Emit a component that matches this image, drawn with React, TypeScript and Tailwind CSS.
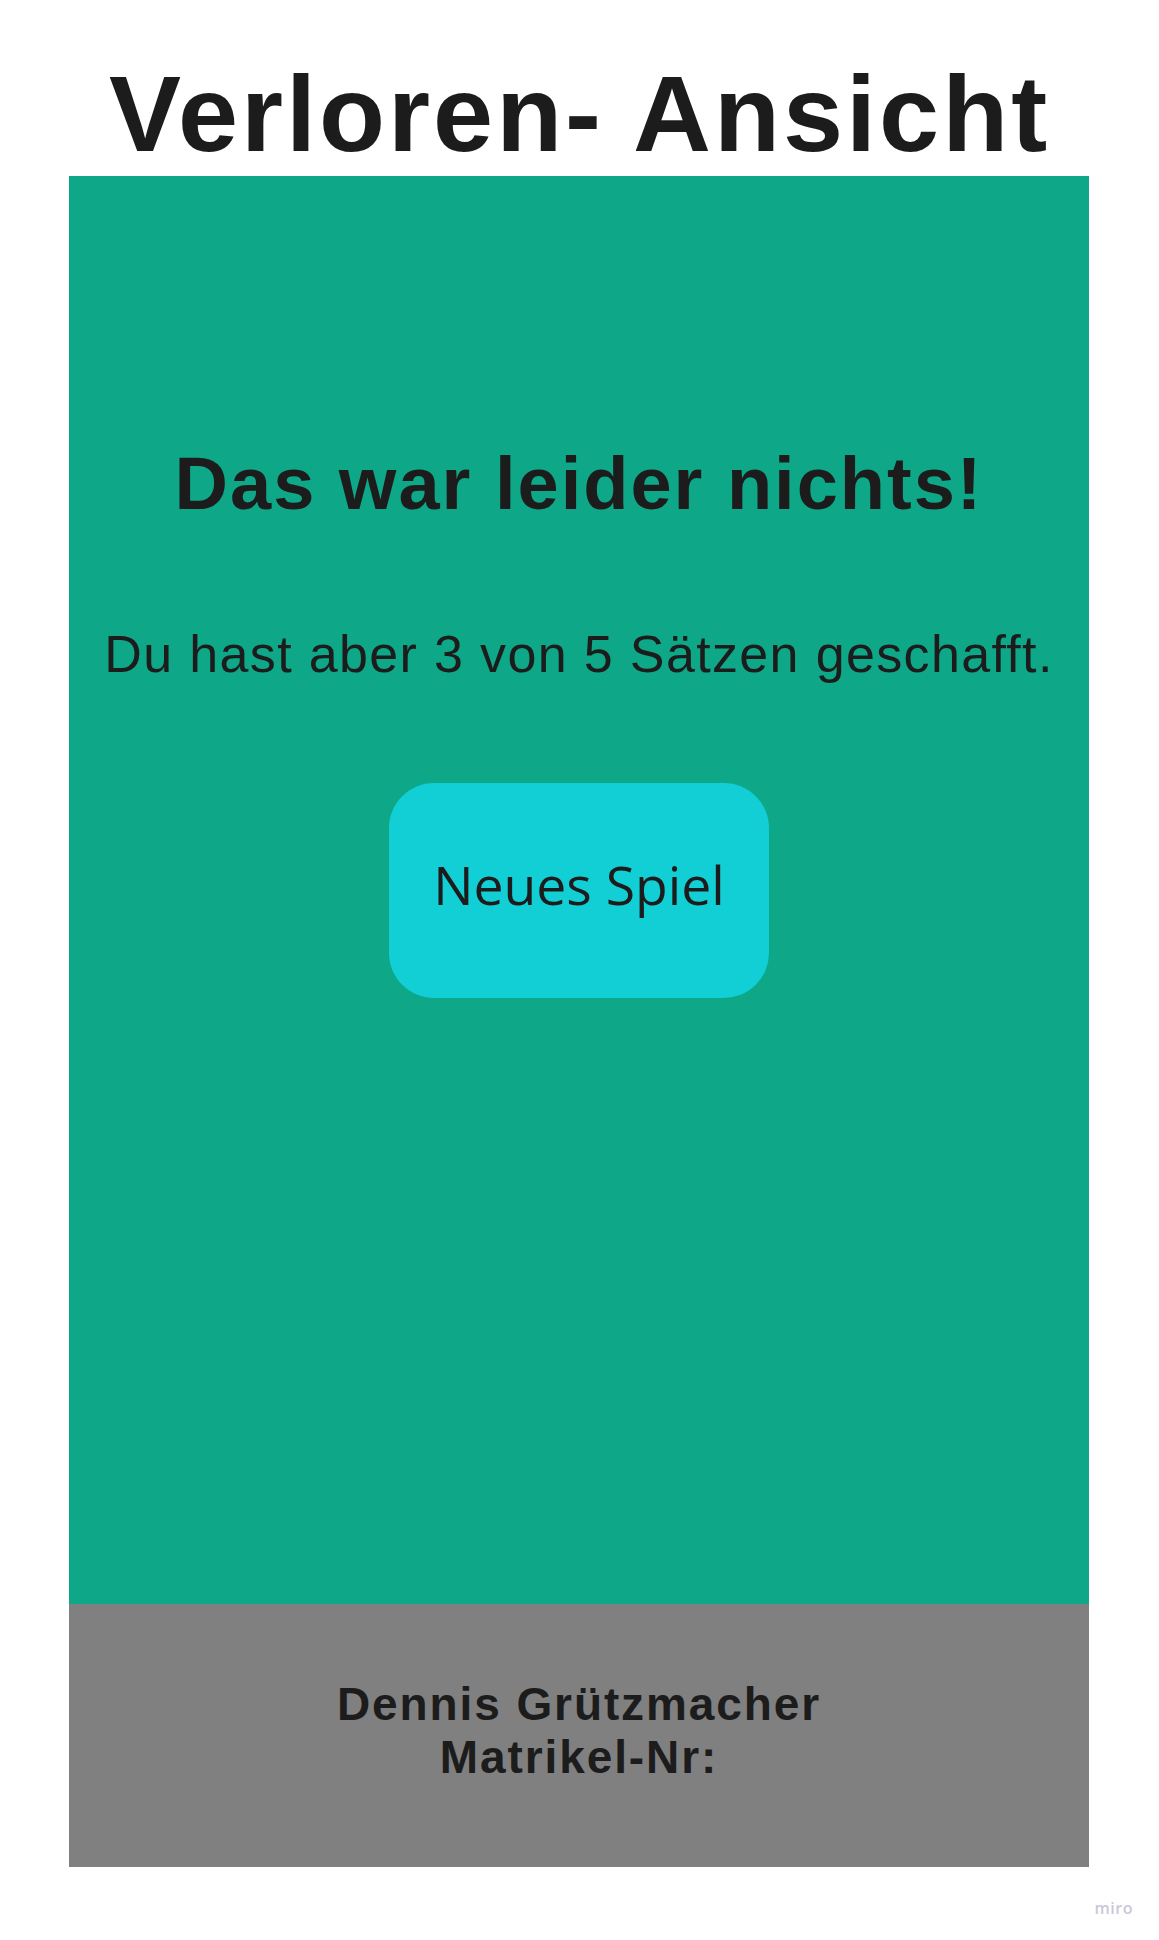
export default function App() {
  return (
    <div className="min-h-[1940px] w-[1159px] bg-white font-['Liberation_Sans',Arial,sans-serif] text-[#1c1c1c]">
      {/* Titel */}
      <h1 className="pt-[51px] text-center text-[108px] font-bold leading-[125px] tracking-[3px]">
        Verloren- Ansicht
      </h1>

      {/* Hauptbereich */}
      <main className="ml-[69px] flex h-[1428px] w-[1020px] flex-col items-center bg-[#0ea888] pt-[265px]">
        <h2 className="text-[74px] font-bold leading-[85px] tracking-[2px]">Das war leider nichts!</h2>
        <p className="mt-[98px] text-[52px] leading-[60px] tracking-[1.35px]">
          Du hast aber 3 von 5 Sätzen geschafft.
        </p>
        <button className="mt-[99px] flex h-[215px] w-[380px] items-center justify-center rounded-[45px] bg-[#12ced5] pb-[10px] font-['Open_Sans',sans-serif] text-[53.5px] text-[#1c1c1c]">
          Neues Spiel
        </button>
      </main>

      {/* Footer */}
      <footer className="ml-[69px] flex h-[263px] w-[1020px] flex-col items-center bg-[#808080] pt-[74px] text-[46px] font-bold leading-[53px] tracking-[1.9px]">
        <span>Dennis Grützmacher</span>
        <span>Matrikel-Nr:</span>
      </footer>

      <div className="flex justify-end pr-[26px] pt-[29px]">
        <span className="font-['Open_Sans',sans-serif] text-[16px] font-semibold tracking-[0.5px] text-[#c9c9d9]">miro</span>
      </div>
    </div>
  );
}
